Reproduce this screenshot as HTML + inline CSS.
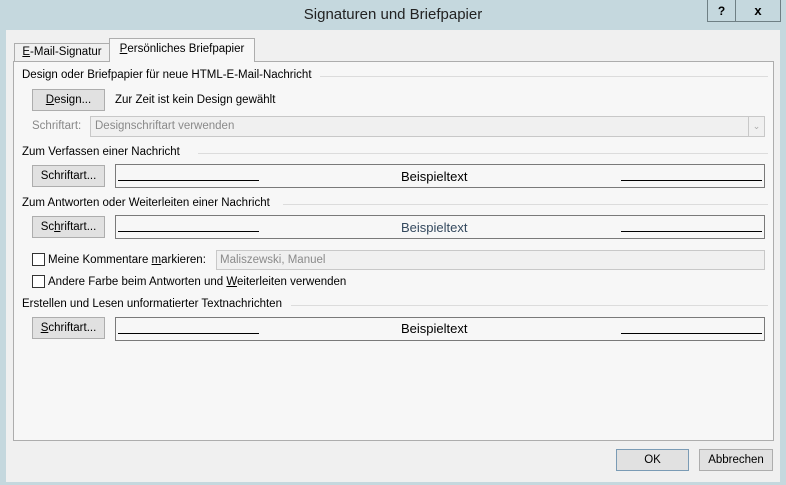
<!DOCTYPE html>
<html><head><meta charset="utf-8"><style>
*{box-sizing:border-box;margin:0;padding:0}
body{width:786px;height:485px;background:#c5d8de;font-family:"Liberation Sans",sans-serif;font-size:11.5px;color:#000;position:relative;overflow:hidden}
.a{position:absolute}
.title{left:0;top:0;width:786px;text-align:center;font-size:15px;line-height:30px;color:#222}
.body{left:6px;top:30px;width:774px;height:452px;background:#f0f0f0}
.panel{left:13px;top:61px;width:761px;height:380px;background:#f7f7f7;border:1px solid #adadad}
.tab{border:1px solid #adadad;border-bottom:none;background:#f0f0f0;text-align:center}
.btn{background:#e1e1e1;border:1px solid #adadad;text-align:center;line-height:20px}
.lbl{white-space:nowrap}
.sep{height:1px;background:#dcdcdc}
.box{border:1px solid #7a7a7a;background:#f7f7f7}
.ln{height:1px;background:#000}
.cb{width:13px;height:13px;border:1px solid #333;background:#fff}
u{text-decoration:underline}
</style></head><body>
<div class="a title">Signaturen und Briefpapier</div>
<div class="a" style="left:707px;top:0;width:29px;height:22px;border:1px solid #6f7f84;border-top:none;text-align:center;font-weight:bold;font-size:12px;line-height:22px">?</div>
<div class="a" style="left:736px;top:0;width:45px;height:22px;border:1px solid #6f7f84;border-top:none;border-left:none;text-align:center;font-weight:bold;font-size:13px;line-height:22px">x</div>
<div class="a body"></div>
<div class="a panel"></div>
<div class="a tab" style="left:14px;top:43px;width:96px;height:18px;line-height:17px"><u>E</u>-Mail-Signatur</div>
<div class="a tab" style="left:109px;top:38px;width:146px;height:24px;background:#f7f7f7;line-height:20px"><u>P</u>ersönliches Briefpapier</div>

<div class="a lbl" style="left:22px;top:69px">Design oder Briefpapier für neue HTML-E-Mail-Nachricht</div>
<div class="a sep" style="left:320px;top:76px;width:448px"></div>
<div class="a btn" style="left:32px;top:89px;width:73px;height:22px"><u>D</u>esign...</div>
<div class="a lbl" style="left:115px;top:94px">Zur Zeit ist kein Design gewählt</div>
<div class="a lbl" style="left:32px;top:120px;color:#888">Schriftart:</div>
<div class="a" style="left:90px;top:116px;width:675px;height:21px;border:1px solid #c8c8c8;background:#f0f0f0;color:#8a8a8a;padding:3px 4px">Designschriftart verwenden</div>
<div class="a" style="left:748px;top:117px;width:16px;height:19px;border-left:1px solid #c8c8c8;color:#aaa;text-align:center;font-size:9px;line-height:19px">⌄</div>

<div class="a lbl" style="left:22px;top:146px">Zum Verfassen einer Nachricht</div>
<div class="a sep" style="left:198px;top:153px;width:570px"></div>
<div class="a btn" style="left:32px;top:165px;width:73px;height:22px">Schriftart...</div>
<div class="a box" style="left:115px;top:164px;width:650px;height:24px"></div>
<div class="a ln" style="left:118px;top:180px;width:141px"></div>
<div class="a ln" style="left:621px;top:180px;width:141px"></div>
<div class="a lbl" style="left:401px;top:169px;font-size:13px">Beispieltext</div>

<div class="a lbl" style="left:22px;top:197px">Zum Antworten oder Weiterleiten einer Nachricht</div>
<div class="a sep" style="left:283px;top:204px;width:485px"></div>
<div class="a btn" style="left:32px;top:216px;width:73px;height:22px">Sc<u>h</u>riftart...</div>
<div class="a box" style="left:115px;top:215px;width:650px;height:24px"></div>
<div class="a ln" style="left:118px;top:231px;width:141px"></div>
<div class="a ln" style="left:621px;top:231px;width:141px"></div>
<div class="a lbl" style="left:401px;top:220px;font-size:13px;color:#34495e">Beispieltext</div>

<div class="a cb" style="left:32px;top:253px"></div>
<div class="a lbl" style="left:48px;top:254px">Meine Kommentare <u>m</u>arkieren:</div>
<div class="a" style="left:216px;top:250px;width:549px;height:20px;border:1px solid #c8c8c8;background:#f0f0f0;color:#8a8a8a;padding:3px 3px">Maliszewski, Manuel</div>
<div class="a cb" style="left:32px;top:275px"></div>
<div class="a lbl" style="left:48px;top:276px">Andere Farbe beim Antworten und <u>W</u>eiterleiten verwenden</div>

<div class="a lbl" style="left:22px;top:298px">Erstellen und Lesen unformatierter Textnachrichten</div>
<div class="a sep" style="left:291px;top:305px;width:477px"></div>
<div class="a btn" style="left:32px;top:317px;width:73px;height:22px"><u>S</u>chriftart...</div>
<div class="a box" style="left:115px;top:317px;width:650px;height:24px"></div>
<div class="a ln" style="left:118px;top:333px;width:141px"></div>
<div class="a ln" style="left:621px;top:333px;width:141px"></div>
<div class="a lbl" style="left:401px;top:321px;font-size:13px">Beispieltext</div>

<div class="a btn" style="left:616px;top:449px;width:73px;height:22px;border-color:#7a9bb5">OK</div>
<div class="a btn" style="left:699px;top:449px;width:74px;height:22px">Abbrechen</div>
</body></html>
